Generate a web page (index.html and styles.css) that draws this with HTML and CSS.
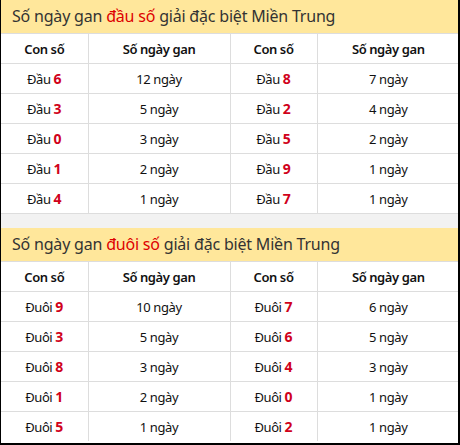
FILE: index.html
```html
<!DOCTYPE html>
<html lang="vi">
<head>
<meta charset="utf-8">
<link rel="stylesheet" href="styles.css">
</head>
<body>
<div class="wrap">
  <section class="block">
    <h2 class="title">Số ngày gan <span class="hl">đầu số</span> giải đặc biệt Miền Trung</h2>
    <table class="grid">
      <colgroup><col class="c1"><col class="c2"><col class="c1"><col class="c2"></colgroup>
      <tr><th>Con số</th><th>Số ngày gan</th><th>Con số</th><th>Số ngày gan</th></tr>
      <tr><td>Đầu <b>6</b></td><td>12 ngày</td><td>Đầu <b>8</b></td><td>7 ngày</td></tr>
      <tr><td>Đầu <b>3</b></td><td>5 ngày</td><td>Đầu <b>2</b></td><td>4 ngày</td></tr>
      <tr><td>Đầu <b>0</b></td><td>3 ngày</td><td>Đầu <b>5</b></td><td>2 ngày</td></tr>
      <tr><td>Đầu <b>1</b></td><td>2 ngày</td><td>Đầu <b>9</b></td><td>1 ngày</td></tr>
      <tr><td>Đầu <b>4</b></td><td>1 ngày</td><td>Đầu <b>7</b></td><td>1 ngày</td></tr>
    </table>
  </section>
  <div class="gap"></div>
  <section class="block">
    <h2 class="title">Số ngày gan <span class="hl">đuôi số</span> giải đặc biệt Miền Trung</h2>
    <table class="grid">
      <colgroup><col class="c1"><col class="c2"><col class="c1"><col class="c2"></colgroup>
      <tr><th>Con số</th><th>Số ngày gan</th><th>Con số</th><th>Số ngày gan</th></tr>
      <tr><td>Đuôi <b>9</b></td><td>10 ngày</td><td>Đuôi <b>7</b></td><td>6 ngày</td></tr>
      <tr><td>Đuôi <b>3</b></td><td>5 ngày</td><td>Đuôi <b>6</b></td><td>5 ngày</td></tr>
      <tr><td>Đuôi <b>8</b></td><td>3 ngày</td><td>Đuôi <b>4</b></td><td>3 ngày</td></tr>
      <tr><td>Đuôi <b>1</b></td><td>2 ngày</td><td>Đuôi <b>0</b></td><td>1 ngày</td></tr>
      <tr><td>Đuôi <b>5</b></td><td>1 ngày</td><td>Đuôi <b>2</b></td><td>1 ngày</td></tr>
    </table>
  </section>
</div>
</body>
</html>
```
FILE: styles.css
```css
html, body {
  margin: 0;
  padding: 0;
  background: #fff;
}
.wrap {
  width: 460px;
  height: 445px;
  box-sizing: border-box;
  border-left: 1px solid #000;
  border-right: 2px solid #000;
  border-bottom: 2px solid #000;
  font-family: "Noto Sans", "Open Sans", sans-serif;
  color: #222;
  overflow: hidden;
}
.title {
  margin: 0;
  height: 33px;
  line-height: 33px;
  padding-left: 11px;
  background: #ffe79b;
  border-bottom: 1px solid #ddd;
  font-size: 16px;
  letter-spacing: -0.2px;
  font-weight: 400;
  color: #333;
  white-space: nowrap;
}
.hl {
  color: #dd0000;
}
.grid {
  width: 100%;
  border-collapse: collapse;
  table-layout: fixed;
}
.c1 { width: 87px; }
.c2 { width: 142px; }
.grid th,
.grid td {
  height: 29px;
  padding: 0;
  text-align: center;
  border-bottom: 1px solid #ddd;
  border-right: 1px solid #ddd;
  font-size: 13px;
  letter-spacing: -0.4px;
  color: #111;
}
.grid th {
  font-weight: 600;
}
.grid th:last-child,
.grid td:last-child {
  border-right: 0;
}
.grid tr:last-child td {
  border-bottom: 0;
}
.grid b {
  color: #d0021b;
  font-weight: 700;
  font-size: 14px;
  letter-spacing: 0;
}
.gap {
  height: 15px;
  background: #f2f2f2;
  border-top: 1px solid #ddd;
  box-sizing: border-box;
}
```
